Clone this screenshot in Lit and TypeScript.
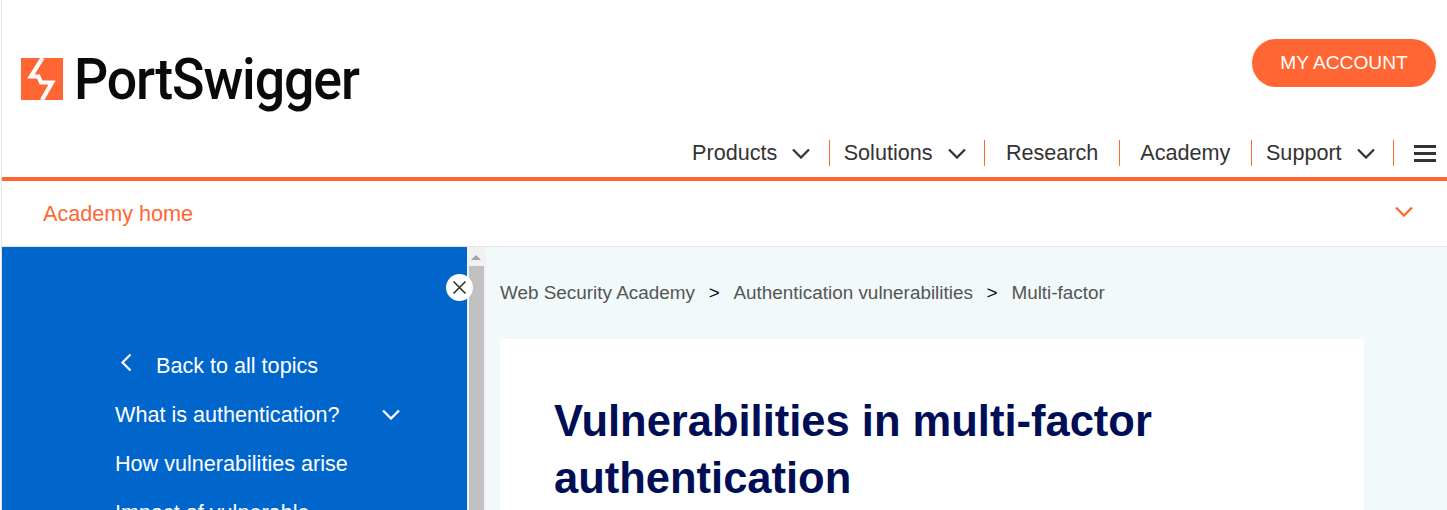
import { LitElement, html, css, svg } from 'lit';
import { customElement } from 'lit/decorators.js';

const chevron = svg`<path d="M1 1.500 9 9.500l8-8" fill="none" stroke="currentColor" stroke-width="2.300"/>`;

@customElement('app-root')
export class AppRoot extends LitElement {
  static styles = css`
    :host {
      display: block;
      height: 510px;
      overflow: hidden;
      background: #fff;
      box-sizing: border-box;
      border-left: 1px solid #e4e4e4;
      margin-left: 1px;
      font-family: 'Liberation Sans', Arial, sans-serif;
      font-size: 21.6px;
      color: #333;
    }

    /* Kopfzeile */
    .top {
      display: flex;
      justify-content: space-between;
      align-items: flex-start;
      height: 140px;
      padding: 39px 11px 0 19px;
      box-sizing: border-box;
    }
    .logo {
      display: flex;
      align-items: flex-start;
      gap: 11px;
      margin-top: 19px;
    }
    .logo svg {
      display: block;
      flex: none;
    }
    .logo span {
      font-family: Roboto, sans-serif;
      font-weight: 500;
      font-size: 58px;
      line-height: 42px;
      letter-spacing: -1.2px;
      color: #0a0a0a;
      transform: scaleX(0.925);
      transform-origin: left center;
    }
    .account {
      width: 184px;
      height: 48px;
      border-radius: 24px;
      background: #ff6633;
      color: #fff;
      font-size: 19.2px;
      line-height: 47px;
      text-align: center;
    }

    nav {
      display: flex;
      justify-content: flex-end;
      align-items: center;
      height: 26px;
      padding: 0 11px 11px 0;
      border-bottom: 4px solid #ff6633;
      line-height: 26px;
      white-space: nowrap;
    }
    .item {
      display: flex;
      align-items: center;
      height: 26px;
      border-right: 1px solid #ff6633;
    }
    .item.menu {
      padding: 0 18.4px 0 14px;
    }
    .item.menu svg {
      margin-left: 15px;
    }
    .item.plain {
      padding: 0 20.6px 0 20px;
    }
    .item.research {
      padding: 0 21px;
    }
    .item svg {
      display: block;
    }
    .burger {
      display: flex;
      flex-direction: column;
      gap: 4px;
      width: 22px;
      margin-left: 20px;
    }
    .burger i {
      display: block;
      height: 3px;
      background: #333;
    }

    .home {
      display: flex;
      justify-content: space-between;
      align-items: center;
      height: 65px;
      padding: 0 34px 0 41px;
      border-bottom: 1px solid #e6e6e6;
      color: #ff6633;
    }
    .home svg {
      display: block;
      margin-top: -5px;
    }

    /* Inhalt */
    .body {
      display: flex;
      position: relative;
      height: 263px;
    }
    .side {
      flex: none;
      width: 465px;
      box-sizing: border-box;
      padding: 94px 0 0 113px;
      background: #0066cc;
      color: #fff;
    }
    .side div {
      display: flex;
      align-items: center;
      height: 49px;
      white-space: nowrap;
    }
    .side .back svg {
      margin: -7px 24px 0 5px;
    }
    .side .open svg {
      margin-left: 43px;
    }
    .close {
      position: absolute;
      z-index: 1;
      left: 444px;
      top: 27px;
      width: 27px;
      height: 27px;
      border-radius: 50%;
      background: #fff;
    }
    .close svg {
      display: block;
    }
    .bar {
      flex: none;
      position: relative;
      width: 19px;
      box-sizing: border-box;
      padding: 19px 2px 0;
      background: #f1f1f1;
    }
    .bar::before {
      content: '';
      position: absolute;
      left: 4px;
      top: 8px;
      border: 5px solid transparent;
      border-top: 0;
      border-bottom: 5px solid #a3a3a3;
    }
    .thumb {
      height: 100%;
      background: #c1c1c1;
    }
    main {
      flex: 1;
      min-width: 0;
      padding: 0 83px 0 14px;
      background: #f2f9fb;
    }
    .crumbs {
      display: flex;
      height: 92px;
      box-sizing: border-box;
      padding-top: 34px;
      font-size: 18.9px;
      line-height: 24px;
      color: #555;
      white-space: nowrap;
    }
    .crumbs b {
      width: 38.5px;
      font-weight: 400;
      text-align: center;
      color: #0a0a0a;
    }
    .card {
      background: #fff;
      padding: 54px 54px 0;
      height: 300px;
    }
    h1 {
      margin: 0;
      font-size: 43.5px;
      line-height: 57px;
      font-weight: 700;
      color: #000f55;
    }
  `;

  render() {
    return html`
      <div class="top">
        <div class="logo">
          <svg width="42" height="42" viewBox="0 0 42 42">
            <rect width="42" height="42" fill="#ff6633" />
            <path d="M21.500 0 10 18.500h7.500l2.500 6h11L21 42" fill="none" stroke="#fff" stroke-width="4.200" />
          </svg>
          <span>PortSwigger</span>
        </div>
        <div class="account">MY ACCOUNT</div>
      </div>
      <nav>
        <div class="item menu">
          Products
          <svg width="18" height="11" viewBox="0 0 18 11">${chevron}</svg>
        </div>
        <div class="item menu">
          Solutions
          <svg width="18" height="11" viewBox="0 0 18 11">${chevron}</svg>
        </div>
        <div class="item research">Research</div>
        <div class="item plain">Academy</div>
        <div class="item menu">
          Support
          <svg width="18" height="11" viewBox="0 0 18 11">${chevron}</svg>
        </div>
        <div class="burger"><i></i><i></i><i></i></div>
      </nav>
      <div class="home">
        Academy home
        <svg width="18" height="11" viewBox="0 0 18 11">${chevron}</svg>
      </div>
      <div class="body">
        <aside class="side">
          <div class="back">
            <svg width="12" height="19" viewBox="0 0 12 19">
              <path d="M10.500 1.500 2.500 9.500l8 8" fill="none" stroke="#fff" stroke-width="2.200" />
            </svg>
            Back to all topics
          </div>
          <div class="open">
            What is authentication?
            <svg width="18" height="11" viewBox="0 0 18 11">${chevron}</svg>
          </div>
          <div>How vulnerabilities arise</div>
          <div>Impact of vulnerable</div>
        </aside>
        <div class="close">
          <svg width="27" height="27" viewBox="0 0 27 27">
            <path d="M7.500 7.500l12 12m0-12-12 12" fill="none" stroke="#333" stroke-width="1.600" />
          </svg>
        </div>
        <div class="bar"><div class="thumb"></div></div>
        <main>
          <div class="crumbs">
            <span>Web Security Academy</span><b>&gt;</b>
            <span>Authentication vulnerabilities</span><b>&gt;</b>
            <span>Multi-factor</span>
          </div>
          <div class="card">
            <h1>Vulnerabilities in multi-factor authentication</h1>
          </div>
        </main>
      </div>
    `;
  }
}
